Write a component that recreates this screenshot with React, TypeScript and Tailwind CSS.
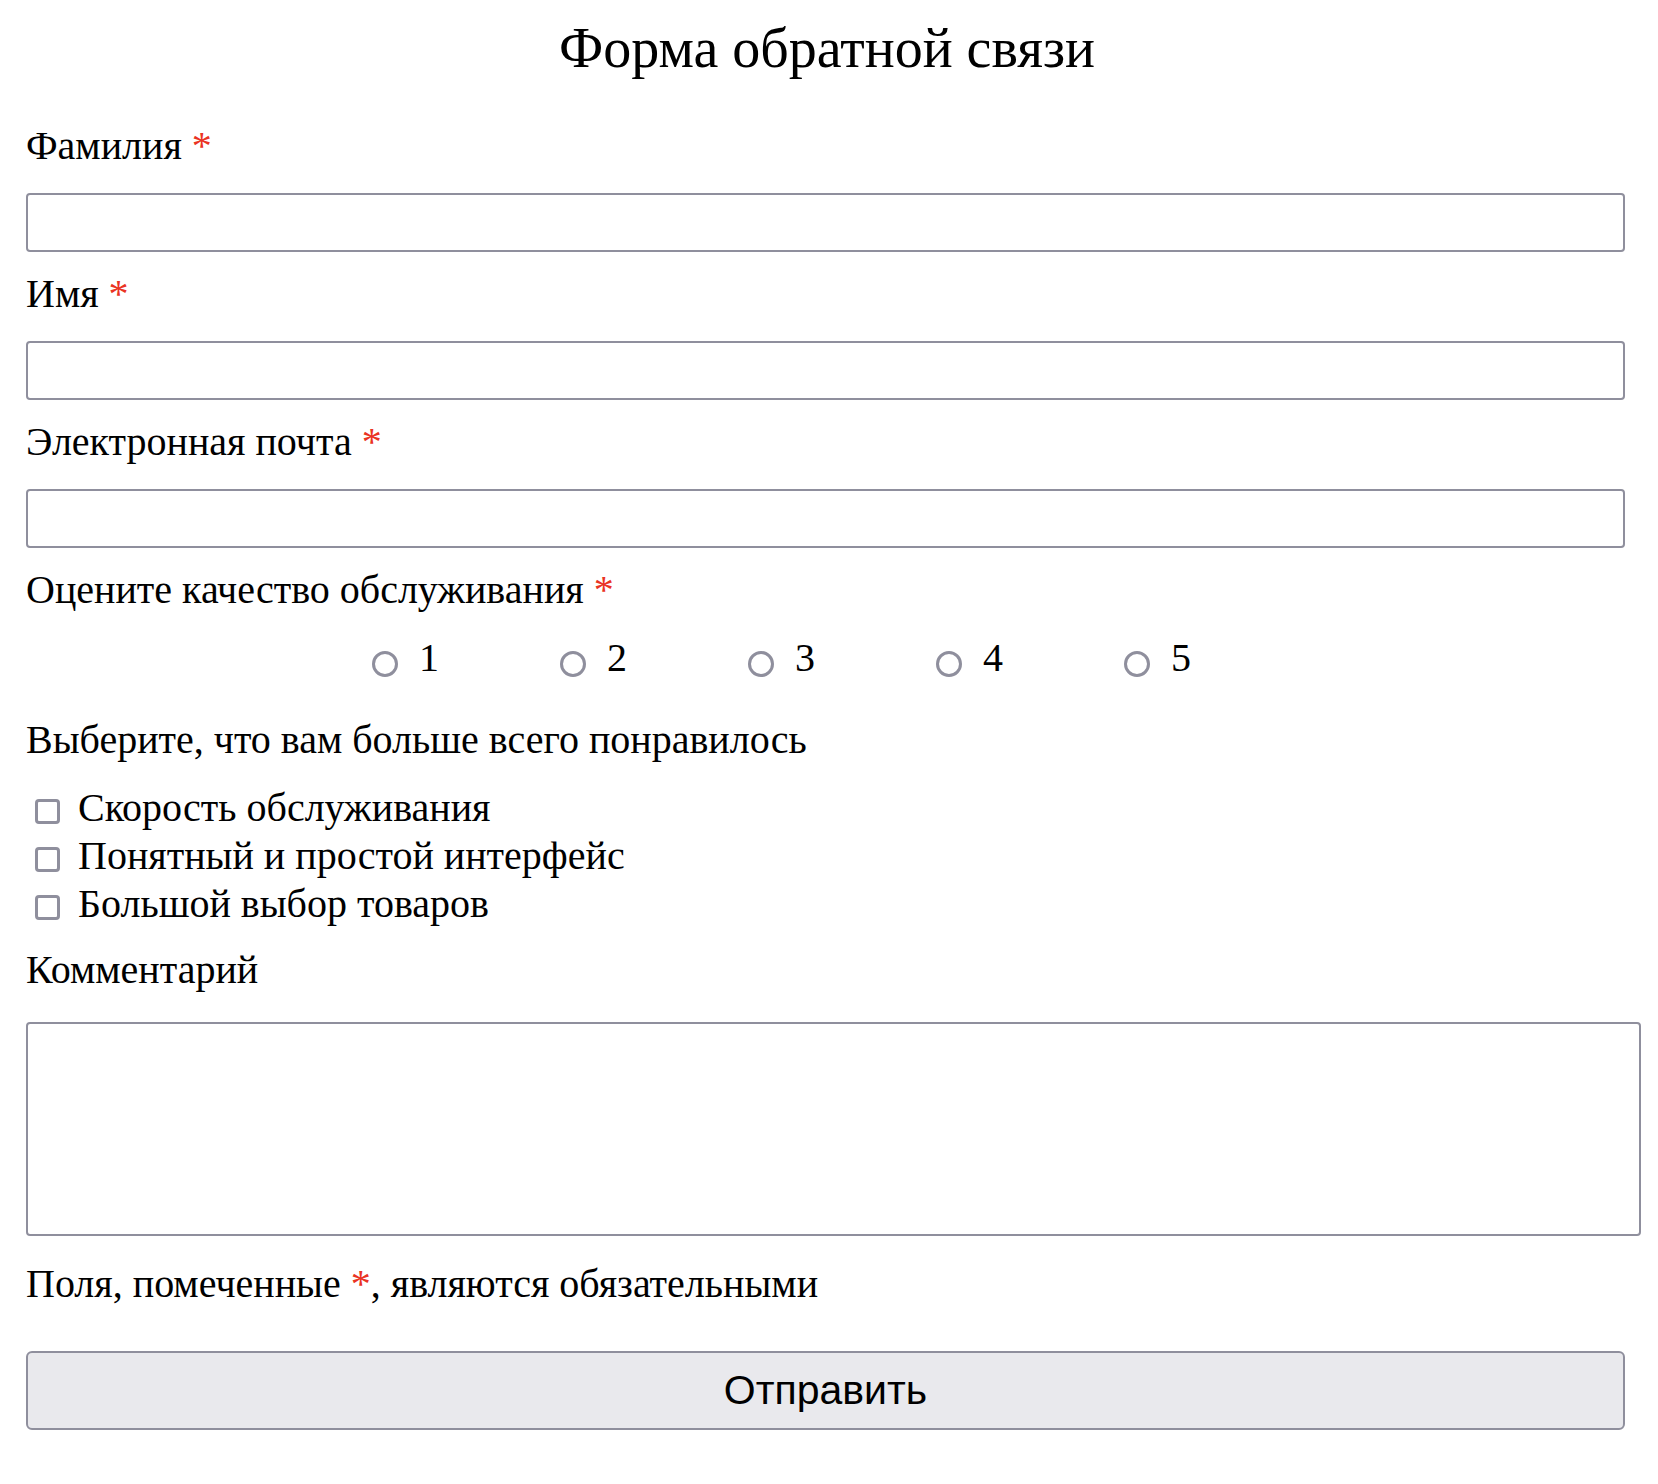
import React from "react";

const serif = { fontFamily: '"Liberation Serif", "Times New Roman", serif' };

function Star() {
  return <span className="text-[#ea3323]"> *</span>;
}

function Label({ children, req }: { children: React.ReactNode; req?: boolean }) {
  return (
    <div className="h-[48px] leading-[46px] text-[40px] text-black whitespace-nowrap">
      {children}
      {req && <Star />}
    </div>
  );
}

function TextInput() {
  return (
    <input
      type="text"
      className="block w-full h-[59px] border-2 border-[#8f8f9d] rounded-[4px] bg-white px-2 text-[30px] outline-none"
    />
  );
}

export default function App() {
  const rates = ["1", "2", "3", "4", "5"];
  const likes = ["Скорость обслуживания", "Понятный и простой интерфейс", "Большой выбор товаров"];
  return (
    <div className="bg-white min-h-[1484px] w-[1658px]" style={serif}>
      <div className="pl-[26px] pr-[33px] pt-[16px]">
        <h1 className="text-center h-[64px] leading-[64px] text-[56px] font-normal text-black pl-[3px]">
          Форма обратной связи
        </h1>
        <div className="mt-[43px]">
          <Label req>Фамилия</Label>
          <div className="mt-[22px]">
            <TextInput />
          </div>
        </div>
        <div className="mt-[19px]">
          <Label req>Имя</Label>
          <div className="mt-[22px]">
            <TextInput />
          </div>
        </div>
        <div className="mt-[19px]">
          <Label req>Электронная почта</Label>
          <div className="mt-[22px]">
            <TextInput />
          </div>
        </div>
        <div className="mt-[19px]">
          <Label req>Оцените качество обслуживания</Label>
          <div className="mt-[20px] flex pl-[346px] h-[48px]">
            {rates.map((r) => (
              <label key={r} className="w-[188px] flex items-start">
                <input
                  type="radio"
                  name="rate"
                  className="appearance-none w-[26px] h-[26px] mt-[16px] rounded-full border-[3px] border-[#8f8f9d] bg-white shrink-0"
                />
                <span className="ml-[21px] text-[40px] leading-[46px]">{r}</span>
              </label>
            ))}
          </div>
        </div>
        <div className="mt-[34px]">
          <Label>Выберите, что вам больше всего понравилось</Label>
          <div className="mt-[20px] flex flex-col">
            {likes.map((l) => (
              <label key={l} className="flex items-start h-[48px] pl-[9px]">
                <input
                  type="checkbox"
                  className="appearance-none w-[25px] h-[25px] mt-[14px] rounded-[4px] border-[3px] border-[#8f8f9d] bg-white shrink-0"
                />
                <span className="ml-[18px] text-[40px] leading-[46px] whitespace-nowrap">{l}</span>
              </label>
            ))}
          </div>
        </div>
        <div className="mt-[18px]">
          <Label>Комментарий</Label>
          <textarea className="block mt-[27px] w-[1615px] h-[214px] border-2 border-[#8f8f9d] rounded-[4px] bg-white resize-none outline-none" />
        </div>
        <div className="mt-[25px]">
          <Label>
            Поля, помеченные <span className="text-[#ea3323]">*</span>, являются обязательными
          </Label>
        </div>
        <button
          type="button"
          className="mt-[42px] block w-full h-[79px] border-2 border-[#8f8f9d] rounded-[6px] bg-[#e9e9ed] text-black text-[41px]"
          style={{ fontFamily: '"Liberation Sans", Arial, sans-serif' }}
        >
          Отправить
        </button>
      </div>
    </div>
  );
}
